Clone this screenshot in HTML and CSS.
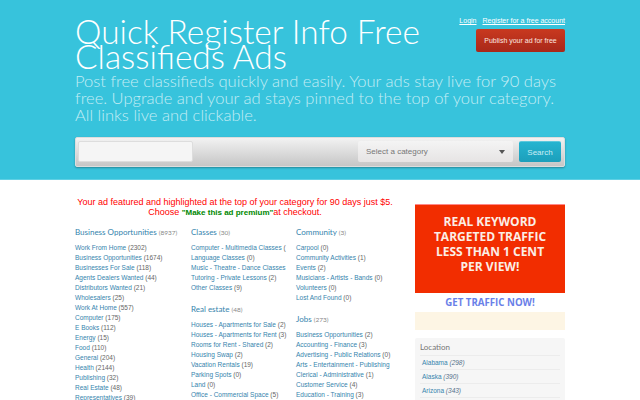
FILE: index.html
```html
<!DOCTYPE html>
<html lang="en">
<head>
<meta charset="utf-8">
<title>Quick Register Info Free Classifieds Ads</title>
<link rel="stylesheet" href="styles.css">
</head>
<body>
<header class="hero">
  <div class="wrap">
    <div class="top">
      <div class="intro">
        <h1>Quick Register Info Free Classifieds Ads</h1>
        <p>Post free classifieds quickly and easily. Your ads stay live for 90 days free. Upgrade and your ad stays pinned to the top of your category. All links live and clickable.</p>
      </div>
      <div class="account">
        <div class="links"><a href="#">Login</a><a href="#">Register for a free account</a></div>
        <a class="publish" href="#">Publish your ad for free</a>
      </div>
    </div>
    <form class="search">
      <div class="field"></div>
      <div class="select"><span>Select a category</span><i class="caret"></i></div>
      <div class="go">Search</div>
    </form>
  </div>
</header>
<main class="wrap content">
  <section class="main">
    <div class="notice">Your ad featured and highlighted at the top of your category for 90 days just $5.<br>Choose <b>"Make this ad premium"</b>at checkout.</div>
    <div class="cols">
      <div class="col wide">
        <h3><a href="#">Business Opportunities</a> <small>(8937)</small></h3>
        <ul>
          <li><a href="#">Work From Home</a> (2302)</li>
          <li><a href="#">Business Opportunities</a> (1674)</li>
          <li><a href="#">Businesses For Sale</a> (118)</li>
          <li><a href="#">Agents Dealers Wanted</a> (44)</li>
          <li><a href="#">Distributors Wanted</a> (21)</li>
          <li><a href="#">Wholesalers</a> (25)</li>
          <li><a href="#">Work At Home</a> (557)</li>
          <li><a href="#">Computer</a> (175)</li>
          <li><a href="#">E Books</a> (112)</li>
          <li><a href="#">Energy</a> (15)</li>
          <li><a href="#">Food</a> (110)</li>
          <li><a href="#">General</a> (204)</li>
          <li><a href="#">Health</a> (2144)</li>
          <li><a href="#">Publishing</a> (32)</li>
          <li><a href="#">Real Estate</a> (48)</li>
          <li><a href="#">Representatives</a> (39)</li>
        </ul>
      </div>
      <div class="col">
        <h3><a href="#">Classes</a> <small>(30)</small></h3>
        <ul>
          <li><a href="#">Computer - Multimedia Classes</a> (</li>
          <li><a href="#">Language Classes</a> (0)</li>
          <li><a href="#">Music - Theatre - Dance Classes</a></li>
          <li><a href="#">Tutoring - Private Lessons</a> (2)</li>
          <li><a href="#">Other Classes</a> (9)</li>
        </ul>
        <h3><a href="#">Real estate</a> <small>(48)</small></h3>
        <ul>
          <li><a href="#">Houses - Apartments for Sale</a> (2)</li>
          <li><a href="#">Houses - Apartments for Rent</a> (3)</li>
          <li><a href="#">Rooms for Rent - Shared</a> (2)</li>
          <li><a href="#">Housing Swap</a> (2)</li>
          <li><a href="#">Vacation Rentals</a> (19)</li>
          <li><a href="#">Parking Spots</a> (0)</li>
          <li><a href="#">Land</a> (0)</li>
          <li><a href="#">Office - Commercial Space</a> (5)</li>
        </ul>
      </div>
      <div class="col">
        <h3><a href="#">Community</a> <small>(3)</small></h3>
        <ul>
          <li><a href="#">Carpool</a> (0)</li>
          <li><a href="#">Community Activities</a> (1)</li>
          <li><a href="#">Events</a> (2)</li>
          <li><a href="#">Musicians - Artists - Bands</a> (0)</li>
          <li><a href="#">Volunteers</a> (0)</li>
          <li><a href="#">Lost And Found</a> (0)</li>
        </ul>
        <h3><a href="#">Jobs</a> <small>(273)</small></h3>
        <ul>
          <li><a href="#">Business Opportunities</a> (2)</li>
          <li><a href="#">Accounting - Finance</a> (3)</li>
          <li><a href="#">Advertising - Public Relations</a> (0)</li>
          <li><a href="#">Arts - Entertainment - Publishing</a></li>
          <li><a href="#">Clerical - Administrative</a> (1)</li>
          <li><a href="#">Customer Service</a> (4)</li>
          <li><a href="#">Education - Training</a> (3)</li>
        </ul>
      </div>
    </div>
  </section>
  <aside class="side">
    <div class="banner">REAL KEYWORD TARGETED TRAFFIC LESS THAN 1 CENT PER VIEW!</div>
    <a class="cta" href="#">GET TRAFFIC NOW!</a>
    <div class="cream"></div>
    <div class="loc">
      <h4>Location</h4>
      <ul>
        <li><a href="#">Alabama</a> <em>(298)</em></li>
        <li><a href="#">Alaska</a> <em>(390)</em></li>
        <li><a href="#">Arizona</a> <em>(343)</em></li>
        <li><a href="#">Arkansas</a> <em>(307)</em></li>
      </ul>
    </div>
  </aside>
</main>
</body>
</html>
```
FILE: styles.css
```css
* { box-sizing: border-box; }
html, body { margin: 0; height: 400px; overflow: hidden; background: #fff; }
body { font-family: "Liberation Sans", Arial, sans-serif; font-size: 7px; color: #555; }
a { color: #3584ad; text-decoration: none; }
ul { list-style: none; margin: 0; padding: 0; }
.wrap { width: 490px; margin: 0 auto; }
.hero { height: 180px; background: #37c3dc; border-bottom: 1px solid #5fd0e4; padding-top: 16px; }
.top { display: flex; justify-content: space-between; }
.intro { width: 490px; margin-right: -490px; flex: none; padding-top: 3px; }
h1 { margin: 0; font: 300 33.4px/25px Lato, sans-serif; color: #fff; width: 380px; }
.intro p { margin: 4px 0 0; font: 300 16.55px/17px Lato, sans-serif; color: #c4edf5; width: 490px; }
.account { display: flex; flex-direction: column; align-items: flex-end; position: relative; margin-left: auto; }
.links { font-size: 7px; line-height: 8px; margin-top: 1px; display: flex; gap: 6px; }
.links a { color: #fff; text-decoration: underline; }
.publish { margin-top: 4px; width: 89px; height: 23px; background: linear-gradient(#c9391f, #a8281a); border-radius: 2px; color: #fbe8e0; font-size: 7px; line-height: 23px; text-align: center; }
.search { margin-top: 13px; height: 30px; padding: 3px 3px 4px 2px; background: linear-gradient(#f2f2f2, #c6c6c6); border: 1px solid #ddd; border-radius: 2px; box-shadow: 0 1px 2px rgba(0,0,0,.3); display: flex; align-items: stretch; }
.field { width: 115px; background: #f5f5f5; border: 1px solid #ddd; border-radius: 2px; }
.select { margin-left: auto; width: 155px; background: linear-gradient(#f4f4f4, #e6e4e4); border-radius: 2px; display: flex; align-items: center; justify-content: space-between; padding: 0 8px; font-size: 8px; color: #777; }
.caret { width: 0; height: 0; border: 3px solid transparent; border-top: 4px solid #555; border-bottom: 0; }
.go { margin-left: 6px; width: 42px; background: linear-gradient(#25b4d0, #1c9fbb); border-top: 1px solid #5cc8dc; border-radius: 2px; color: #c9edf4; font-size: 8px; line-height: 21px; text-align: center; }
.content { display: flex; gap: 20px; padding-top: 17px; }
.main { width: 320px; }
.notice { font-size: 9px; line-height: 10px; color: #f00; text-align: center; }
.notice b { color: #080; font-size: 8px; }
.cols { display: flex; margin-top: 9px; }
.col { width: 105px; flex: none; }
.col.wide { width: 116px; }
.col h3 { margin: 0; font: 400 8px/10px Lato, sans-serif; }
.col h3 small { font-size: 6.5px; color: #888; }
.col ul { margin: 5px 0 11px; }
.col li { font-size: 6.5px; line-height: 10px; white-space: nowrap; color: #666; }
.side { width: 150px; flex: none; padding-top: 7px; }
.banner { height: 89px; background: #f22d00; border-top: 1px solid #f88; color: #fbeee6; font: 700 12px/15px "Open Sans", sans-serif; text-align: center; padding: 9px 14px 0; }
.cta { display: block; margin-top: 4px; font: 700 9.7px/12px "Open Sans", sans-serif; color: #6a80e8; text-align: center; }
.cream { height: 18px; margin-top: 3px; background: #fdf5e4; }
.loc { margin-top: 8px; background: #f6f6f6; border-radius: 2px; padding: 4px 5px; }
.loc h4 { margin: 0; font: 400 8px/10px Lato, sans-serif; color: #777; padding-bottom: 3px; }
.loc li { border-top: 1px solid #ececec; padding: 0 2px; font-size: 6.5px; line-height: 13px; color: #667; }
.loc em { color: #55708a; }
```
